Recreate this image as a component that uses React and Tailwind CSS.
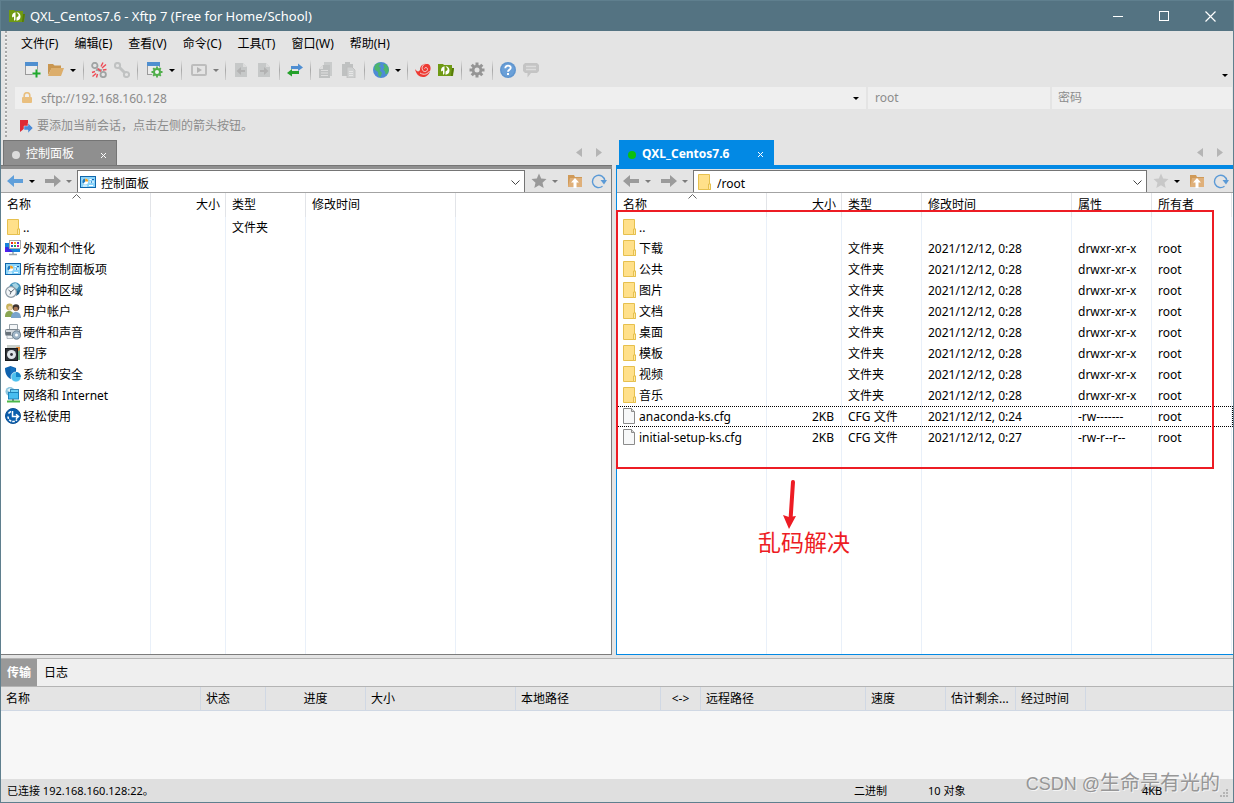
import React from "react";

function Svg({ size = 16, children, className = "", box = "0 0 16 16" }) {
  return (
    <svg width={size} height={size} viewBox={box} className={"shrink-0 " + className} aria-hidden="true">
      {children}
    </svg>
  );
}

/* ---------- toolbar icons ---------- */

const FolderLogo = ({ className }) => (
  <Svg className={className}>
    <path d="M0 2h5l1 1h8v3h2l-1 8H0z" fill="#6f9a14" />
    <path d="M14 6h2l-1.500 8H13z" fill="#557a08" />
    <path d="M3 8.500C3 6 4.500 4.500 6.500 4.300V11c0 1-.500 1.800-1.500 1.500V8.500L3.500 9.500z" fill="#fff" />
    <path d="M7.500 4.300C10 4.300 11.500 6 11.500 8.500c0 2.500-1.500 4-4 4.300V9.500L9.500 8V6.500z" fill="#fff" />
  </Svg>
);

const NewSession = () => (
  <Svg>
    <rect x="0.500" y="0.500" width="12" height="12" fill="#ececec" stroke="#9a9a9a" />
    <rect x="0" y="0" width="13" height="4" fill="#4f8fd0" />
    <path d="M11.500 7.500v8M7.500 11.500h8" stroke="#e4e4e4" strokeWidth="4" />
    <path d="M11.500 7.500v8M7.500 11.500h8" stroke="#1fa82c" strokeWidth="2" />
  </Svg>
);

const OpenFolder = () => (
  <Svg>
    <path d="M0 2h5l1.500 1.500H13V6H4L0 13z" fill="#c99650" />
    <path d="M3.500 6H16l-3 8H0z" fill="#dcae6c" />
  </Svg>
);

const LinkBroken = () => (
  <Svg>
    <g fill="none" stroke="#a0a4a4" strokeWidth="1.800">
      <circle cx="3.800" cy="3.500" r="2.700" />
      <circle cx="12.200" cy="12.500" r="2.700" />
      <path d="M5 7.500c1 1 2.500 1 3.500-1M7.500 9.500c1-2 2.500-2 3.500-1" />
    </g>
    <path d="M10 4.500L12 .500M11 6l4-3.500M12 8l3.500-.500M1 10.500l3-1M1.500 14.500L5 11.500M5.500 15.500L6.500 12M6.500 6.500l3.500 3" stroke="#ee4a55" strokeWidth="1.400" />
  </Svg>
);

const LinkGray = () => (
  <Svg>
    <g fill="none" stroke="#c0c2c2" strokeWidth="2">
      <circle cx="3.500" cy="3.500" r="2.600" />
      <circle cx="12.500" cy="12.500" r="2.600" />
      <path d="M5 5l6 6" strokeWidth="3" />
    </g>
  </Svg>
);

const SessionGear = () => (
  <Svg>
    <rect x="0.500" y="0.500" width="12" height="12" fill="#ececec" stroke="#9a9a9a" />
    <rect x="0" y="0" width="13" height="4" fill="#4f8fd0" />
    <circle cx="10" cy="10" r="5.500" fill="#e4e4e4" />
    <circle cx="10" cy="10" r="3" fill="#f4f4f4" stroke="#4fae4a" strokeWidth="2" />
    <path d="M10 4.500v2M10 13.500v2M4.500 10h2M13.500 10h2M6.200 6.200l1.300 1.300M12.500 12.500l1.300 1.300M6.200 13.800l1.300-1.300M12.500 7.500l1.300-1.300" stroke="#4fae4a" strokeWidth="1.800" />
  </Svg>
);

const PlayBox = () => (
  <Svg>
    <rect x="1" y="3" width="14" height="10" rx="1" fill="none" stroke="#bdbdbd" strokeWidth="2" />
    <path d="M6 5l5 3-5 3z" fill="#b4b4b4" />
  </Svg>
);

const DocArrow = ({ right }) => (
  <Svg>
    <path d="M2 1h8l4 4v10H2z" fill="#c6c8c8" />
    <path d="M10 1v4h4" fill="#dcdcdc" />
    {right ? (
      <path d="M4 8h4V5l4.500 4L8 13v-3H4z" fill="#b2b2b2" />
    ) : (
      <path d="M12 8H8V5L3.500 9 8 13v-3h4z" fill="#b2b2b2" />
    )}
  </Svg>
);

const Transfer = () => (
  <Svg>
    <path d="M4 4h7V1.500L16 5.500 11 9V7H4z" fill="#4f8ed2" />
    <path d="M12 9H5V7L0 11l5 3.500V12h7z" fill="#24a12a" />
  </Svg>
);

const CopyIcon = () => (
  <Svg>
    <path d="M6 0h8v14H6z" fill="#c9cbcb" />
    <path d="M5 3h7v13H1V7z" fill="#bfc1c1" />
    <path d="M3 8.500h7M3 11h7M3 13.500h7" stroke="#dedede" />
    <path d="M1 7l4-4v4z" fill="#dedede" />
  </Svg>
);

const PasteIcon = () => (
  <Svg>
    <path d="M1 2h3V0h5v2h3v12H1z" fill="#bfc1c1" />
    <path d="M6 5h5l3 3v8H6z" fill="#cfd1d1" stroke="#bcbcbc" strokeWidth="0.800" />
    <path d="M8 9.500h4M8 11.500h4M8 13.500h4" stroke="#e6e6e6" />
  </Svg>
);

const GlobeIcon = () => (
  <Svg>
    <circle cx="8" cy="8" r="8" fill="#4d8bd6" />
    <path d="M1.500 4C3 1.500 5 .500 7 .700l.500 2L5.500 4 8 6 6.500 8l2.500 3-1.500 4-2-1L5 10 1.500 7.500zM10 2.500l2.500-.500 2.500 2.500 1 4-1.500 3-2 1-.500-3-2-2 1.500-2z" fill="#4cb56c" />
  </Svg>
);

const Swirl = () => (
  <Svg>
    <path d="M0 7c2 3 4 3 5 1 0-5 4-7 8-6 3 1 3 5 2 7-1 4-4 6-7 6-4 0-7-3-8-8z" fill="#ee3a33" />
    <path d="M14 1.500c-5-1-8 3-6.500 6.500 1 2.300 4.500 2 5-.500.300-2-2.500-2.700-3-1M5 11c4 2.500 8 1 9.500-2" fill="none" stroke="#efe2e2" strokeWidth="0.900" />
  </Svg>
);

const GearIcon = () => (
  <Svg>
    <g stroke="#959595" strokeWidth="3">
      <path d="M8 0.500v15M0.500 8h15M2.700 2.700l10.600 10.600M2.700 13.300L13.300 2.700" />
    </g>
    <circle cx="8" cy="8" r="5.200" fill="#959595" />
    <circle cx="8" cy="8" r="2.500" fill="#e4e4e4" />
  </Svg>
);

const HelpIcon = () => (
  <Svg>
    <circle cx="8" cy="8" r="8" fill="#5f95cf" />
    <circle cx="8" cy="8" r="6.500" fill="#6ba0d8" />
    <path d="M5.300 6.300C5.300 2.500 11 3 10.700 6c-.200 1.800-2.700 1.800-2.700 3.800" fill="none" stroke="#fff" strokeWidth="1.900" />
    <rect x="7" y="11" width="2" height="2" fill="#fff" />
  </Svg>
);

const ChatIcon = () => (
  <Svg>
    <path d="M2 1h12l2 2v6l-2 2H8l-3.500 4.500V11H2L0 9V3z" fill="#c4c4c4" />
    <path d="M3 4.500h10M3 7.500h10" stroke="#dcdcdc" strokeWidth="1.500" />
  </Svg>
);

/* ---------- small glyphs ---------- */

const Caret = ({ gray }) => (
  <svg width="6" height="3" viewBox="0 0 6 3" className={"shrink-0 " + (gray ? "text-[#7c7c7c]" : "text-black")} aria-hidden="true">
    <path d="M0 0h6L3 3z" fill="currentColor" />
  </svg>
);

const CloseGlyph = () => (
  <svg width="7" height="7" viewBox="0 0 7 7" aria-hidden="true">
    <path d="M1 1l5 5M6 1L1 6" stroke="#fff" strokeWidth="1" />
  </svg>
);

const NavArrow = ({ color, right }) => (
  <Svg>
    {right ? (
      <path d="M0 6h9V2l7 6-7 6v-4H0z" fill={color} />
    ) : (
      <path d="M16 6H7V2L0 8l7 6v-4h9z" fill={color} />
    )}
  </Svg>
);

const StarIcon = ({ color }) => (
  <Svg>
    <path d="M8 .500l2.200 5 5.300.600-4 3.600 1.200 5.300L8 12.300 3.300 15l1.200-5.300-4-3.600 5.300-.600z" fill={color} />
  </Svg>
);

const FolderUp = () => (
  <Svg>
    <path d="M1 2h6l1 2h7v10H1z" fill="#d09a58" />
    <path d="M3 5h12v9H1z" fill="#dfb07a" />
    <path d="M8 5l4 4.500H9.500V15h-3V9.500H4z" fill="#fff" />
  </Svg>
);

const Refresh = () => (
  <Svg>
    <path d="M11.500 13.300a6.200 6.200 0 1 1 2.300-5.800" fill="none" stroke="#5b9ad6" strokeWidth="1.400" />
    <path d="M9.500 7H16l-3 4.500z" fill="#5b9ad6" />
  </Svg>
);

const LockIcon = () => (
  <svg width="12" height="12" viewBox="0 0 12 12" className="shrink-0" aria-hidden="true">
    <path d="M3.200 6V3.500a2.700 2.700 0 0 1 5.600 0V6" fill="none" stroke="#e9bf7f" strokeWidth="1.600" />
    <rect x="1" y="5" width="10" height="6" rx="1" fill="#e9bf7f" />
  </svg>
);

const FlagArrow = () => (
  <svg width="13" height="13" viewBox="0 0 13 13" className="shrink-0" aria-hidden="true">
    <path d="M0 0h8v8H5l-5 4z" fill="#dd2a36" />
    <path d="M4 6h4V3l5 5-5 5v-3H4z" fill="#4b8bd8" stroke="#e4e4e4" strokeWidth="0.500" />
  </svg>
);

/* ---------- file icons ---------- */

const FolderIcon = () => (
  <Svg>
    <path d="M2.500 0.500h11v9.500h1v5.500h-12z" fill="#ffe08a" stroke="#e6c04e" />
    <path d="M12.500 15.500v-5.500h2v5.500z" fill="#ffe9a8" stroke="#e6c04e" />
  </Svg>
);

const FileIcon = () => (
  <Svg>
    <path d="M2.500 0.500h8l3 3v12h-11z" fill="#f7f8f9" stroke="#8b8b8b" />
    <path d="M10.500 0.500v3h3" fill="#d8d8d8" stroke="#8b8b8b" />
  </Svg>
);

const PanelIcon = () => (
  <Svg>
    <rect x="0.500" y="2.500" width="15" height="11" fill="#8ad4fa" stroke="#0f66ac" />
    <circle cx="5.200" cy="7.500" r="3" fill="#fff" />
    <path d="M5.200 7.500V4.500a3 3 0 0 0-2 5.200z" fill="#1c7cc4" />
    <path d="M5.200 7.500h3a3 3 0 0 0-3-3z" fill="#f5a01e" />
    <path d="M9.500 5.500h2M9.500 8h1.500M12 8h2M3 12h4M9 11.500h4" stroke="#fff" strokeWidth="1.200" />
    <path d="M12 5.500h2M11 8h1" stroke="#1c66b0" strokeWidth="1.200" />
  </Svg>
);

const AppearanceIcon = () => (
  <Svg>
    <rect x="0" y="3" width="15" height="9" fill="#1583dc" />
    <path d="M0 7l5 5H0z" fill="#5a1cf0" />
    <path d="M0 7h3l5 5H3z" fill="#3a2ce0" />
    <path d="M4 14.500h8M8 12v2" stroke="#9aa6ae" strokeWidth="1.500" />
    <rect x="4.500" y="0.500" width="11" height="8" fill="#fff" stroke="#a8a8a8" />
    <path d="M6 2h2v2H6z" fill="#e22" />
    <path d="M9 2h2v2H9z" fill="#f39a1b" />
    <path d="M12 2h2v2h-2z" fill="#5b2bd0" />
    <path d="M6 5h2v2H6z" fill="#2a58d0" />
    <path d="M9 5h2v2H9z" fill="#22a24a" />
    <path d="M12 5h2v2h-2z" fill="#d01c8a" />
  </Svg>
);

const ClockIcon = () => (
  <Svg>
    <circle cx="10" cy="6.200" r="6" fill="#3d8fb8" />
    <path d="M7 2l4-1 3 3-2 3-3-1z" fill="#a6d4e4" />
    <path d="M12 9l3-1-1 4-3 2z" fill="#24668c" />
    <circle cx="6" cy="10" r="5.300" fill="#f3f6f8" stroke="#8d9aa4" strokeWidth="1.200" />
    <path d="M3.500 8l2.500 2 3.500-3M6 10l-1 2.500" fill="none" stroke="#56626c" />
  </Svg>
);

const UsersIcon = () => (
  <Svg>
    <circle cx="4.500" cy="4" r="3.400" fill="#c8b25c" />
    <circle cx="5" cy="5" r="2" fill="#ecd0a8" />
    <path d="M0 14c0-5 2-6 4.500-6S9 10 9 14z" fill="#8aa653" />
    <circle cx="11" cy="4.500" r="3.300" fill="#3c3330" />
    <circle cx="10.800" cy="6" r="2.300" fill="#a87756" />
    <path d="M6 15c0-4 2-6 5-6s5 2 5 6z" fill="#7aa4cc" />
  </Svg>
);

const PrinterIcon = () => (
  <Svg>
    <path d="M4.500 0.500h8v6h-8z" fill="#f4f6f8" stroke="#98a2aa" />
    <rect x="0.500" y="5.500" width="14" height="6" rx="1" fill="#d4d9dd" stroke="#7c868e" />
    <path d="M1 8h5v3H1z" fill="#68727a" />
    <path d="M2 11.500h6v3H2z" fill="#eef1f3" stroke="#98a2aa" strokeWidth="0.700" />
    <circle cx="11.500" cy="11" r="4.200" fill="#9eb4c6" stroke="#6a7f90" />
    <circle cx="11.500" cy="11" r="1.500" fill="#fff" />
  </Svg>
);

const ProgramIcon = () => (
  <Svg>
    <path d="M2 0h13v15H2z" fill="#c9cfca" />
    <path d="M11 2h4v7z" fill="#e08a3a" />
    <path d="M12 7l3-2v10h-3z" fill="#6faf83" />
    <rect x="0.500" y="3.500" width="12" height="12" fill="#2e3238" stroke="#15181c" />
    <circle cx="6.500" cy="9.500" r="4.500" fill="#dfe6ea" />
    <circle cx="6.500" cy="9.500" r="1.400" fill="#2e3238" />
  </Svg>
);

const ShieldIcon = () => (
  <Svg>
    <path d="M5.500 0L11 2c.500 5-1 8.500-5.500 11C1.500 10.500 0 7 0 2z" fill="#0f62ae" />
    <path d="M5.500 1L10 2.500c.300 4-1 7-4.500 9z" fill="#1571c0" />
    <circle cx="11" cy="11" r="5" fill="#4fc0ee" stroke="#fff" strokeWidth="0.600" />
    <path d="M11 11V6a5 5 0 0 1 5 5z" fill="#1583c8" />
  </Svg>
);

const NetworkIcon = () => (
  <Svg>
    <circle cx="5" cy="4.500" r="4.500" fill="#8cc5de" />
    <path d="M2 3l3-2 2 2-2 2z" fill="#dff1f6" />
    <rect x="5.500" y="2.500" width="8" height="6" fill="#6ed0f4" stroke="#3688b8" />
    <rect x="3.500" y="5.500" width="10" height="6.500" fill="#48bdf0" stroke="#1c84bc" />
    <path d="M8 12v2" stroke="#68808c" strokeWidth="2" />
    <path d="M2 14.500h13" stroke="#4cb84a" strokeWidth="2" />
  </Svg>
);

const EaseIcon = () => (
  <Svg>
    <circle cx="8" cy="8" r="7.500" fill="#0b5fae" stroke="#0a4f94" />
    <path d="M3 8.500a5 5 0 0 0 9 3" fill="none" stroke="#fff" strokeWidth="1.500" strokeDasharray="2.500 1" />
    <path d="M3.500 5.500A5 5 0 0 1 6 3.500" fill="none" stroke="#fff" strokeWidth="1.400" />
    <path d="M7.500 3v5.500H13M11 6.300l2.500 2.200-2.500 2.200" fill="none" stroke="#fff" strokeWidth="1.500" />
  </Svg>
);

/* ---------- toolbar ---------- */

const Tool = ({ label, children }) => (
  <button type="button" aria-label={label} className="flex h-6 w-[23px] shrink-0 items-center justify-center">
    {children}
  </button>
);

const DropTool = ({ label, gray }) => (
  <button type="button" aria-label={label} className="flex h-6 w-[11px] shrink-0 items-center justify-center">
    <Caret gray={gray} />
  </button>
);

const Sep = () => (
  <span className="flex h-5 w-2 shrink-0 justify-center">
    <span className="w-px bg-gradient-to-b from-[#e4e4e4] via-[#a8a8a8] to-[#d0d0d0]" />
  </span>
);

function Toolbar() {
  return (
    <div className="flex h-[26px] items-center pl-[13px] pr-[5px]">
      <div className="flex pr-px">
        <Tool label="新建"><NewSession /></Tool>
        <Tool label="打开"><OpenFolder /></Tool>
        <DropTool label="打开选项" />
      </div>
      <Sep />
      <Tool label="断开"><LinkBroken /></Tool>
      <Tool label="重新连接"><LinkGray /></Tool>
      <Sep />
      <div className="flex pl-0.5">
        <Tool label="属性"><SessionGear /></Tool>
        <DropTool label="属性选项" />
      </div>
      <Sep />
      <div className="flex pl-0.5">
        <Tool label="运行"><PlayBox /></Tool>
        <DropTool label="运行选项" gray />
      </div>
      <Sep />
      <Tool label="下载"><DocArrow /></Tool>
      <Tool label="上传"><DocArrow right /></Tool>
      <Sep />
      <Tool label="同步"><Transfer /></Tool>
      <Sep />
      <Tool label="复制"><CopyIcon /></Tool>
      <Tool label="粘贴"><PasteIcon /></Tool>
      <Sep />
      <div className="flex pl-px">
        <Tool label="编码"><GlobeIcon /></Tool>
        <DropTool label="编码选项" />
      </div>
      <Sep />
      <Tool label="Xshell"><Swirl /></Tool>
      <Tool label="Xftp"><FolderLogo /></Tool>
      <Sep />
      <Tool label="选项"><GearIcon /></Tool>
      <Sep />
      <Tool label="帮助"><HelpIcon /></Tool>
      <Tool label="反馈"><ChatIcon /></Tool>
      <button type="button" aria-label="更多" className="ml-auto self-end pb-1.5">
        <Caret />
      </button>
    </div>
  );
}

/* ---------- panes ---------- */

const TabScroll = () => (
  <div className="ml-auto flex items-center gap-3.5 pr-2.5">
    <button type="button" aria-label="向左">
      <svg width="6" height="9" viewBox="0 0 6 9" aria-hidden="true"><path d="M6 0v9L0 4.500z" fill="#b5b5b5" /></svg>
    </button>
    <button type="button" aria-label="向右">
      <svg width="6" height="9" viewBox="0 0 6 9" aria-hidden="true"><path d="M0 0v9l6-4.500z" fill="#b5b5b5" /></svg>
    </button>
  </div>
);

function NavBar({ id, value, icon, backColor, backGray, starColor, starGray }) {
  return (
    <div className="flex h-6 items-stretch border-b border-[#a3a3a3] bg-[#e4e4e4] pt-px">
      <div className="flex w-[76px] shrink-0 items-center pl-1.5">
        <button type="button" aria-label="后退"><NavArrow color={backColor} /></button>
        <button type="button" aria-label="后退历史" className="flex w-[22px] justify-center pr-1"><Caret gray={backGray} /></button>
        <button type="button" aria-label="前进"><NavArrow color="#9b9b9b" right /></button>
        <button type="button" aria-label="前进历史" className="flex w-4 justify-center"><Caret gray /></button>
      </div>
      <div className="flex min-w-0 flex-1 items-center border border-b-0 border-[#757575] bg-white pl-0.5 pr-1">
        <label htmlFor={id} aria-label="路径">{icon}</label>
        <input id={id} defaultValue={value} className="h-[21px] min-w-0 flex-1 bg-transparent pl-[5px] pt-[3px] outline-none" />
        <button type="button" aria-label="展开路径" className="pt-0.5">
          <svg width="9" height="6" viewBox="0 0 9 6" aria-hidden="true"><path d="M.5.5l4 4 4-4" fill="none" stroke="#444" /></svg>
        </button>
      </div>
      <div className="flex w-[86px] shrink-0 items-center pl-1.5">
        <button type="button" aria-label="收藏"><StarIcon color={starColor} /></button>
        <button type="button" aria-label="收藏列表" className="flex w-5 justify-center pr-1"><Caret gray={starGray} /></button>
        <button type="button" aria-label="上级文件夹"><FolderUp /></button>
        <button type="button" aria-label="刷新" className="pl-2"><Refresh /></button>
      </div>
    </div>
  );
}

const cellLine = "border-r border-[#e9f0f9]";
const headLine = "border-r border-[#e2e4e8]";

function FileTable({ label, columns, rows, focus }) {
  return (
    <table aria-label={label} className="w-full table-fixed border-separate border-spacing-0 text-left">
      <colgroup>
        <col className="w-[150px]" />
        <col className="w-[75px]" />
        <col className="w-[80px]" />
        <col className="w-[150px]" />
        {columns.length > 4 && <col className="w-[80px]" />}
        {columns.length > 4 && <col className="w-[80px]" />}
        <col />
      </colgroup>
      <thead>
        <tr className="h-6">
          {columns.map((c, i) => (
            <th key={c} className={`relative p-0 font-normal ${headLine} ${i === 1 ? "pr-[5px] text-right" : "pl-1.5"}`}>
              {c}
              {i === 0 && (
                <svg width="9" height="5" viewBox="0 0 9 5" className="absolute left-[71px] top-px" aria-hidden="true">
                  <path d="M.5 4.500l4-4 4 4" fill="none" stroke="#666" />
                </svg>
              )}
            </th>
          ))}
          <th className="p-0" />
        </tr>
      </thead>
      <tbody>
        {rows.map((r, ri) => (
          <tr key={r.name} className={`h-[21px] ${ri === focus ? "outline-dotted outline-1 -outline-offset-1 outline-black" : ""}`}>
            <td className={`p-0 align-top ${cellLine}`}>
              <div className="flex h-5 items-center gap-0.5 whitespace-nowrap pl-1 leading-[21px]">
                {r.icon}
                <span>{r.name}</span>
              </div>
            </td>
            {columns.slice(1).map((c, i) => (
              <td key={c} className={`whitespace-nowrap p-0 ${cellLine} ${i === 0 ? "pr-[7px] text-right" : "pl-1.5"}`}>
                {(r.cells || [])[i]}
              </td>
            ))}
            <td className="p-0" />
          </tr>
        ))}
        <tr>
          {columns.map((c) => (
            <td key={c} className={`p-0 ${cellLine}`} />
          ))}
          <td className="p-0" />
        </tr>
      </tbody>
    </table>
  );
}

const localRows = [
  { name: "..", icon: <FolderIcon />, cells: ["", "文件夹"] },
  { name: "外观和个性化", icon: <AppearanceIcon /> },
  { name: "所有控制面板项", icon: <PanelIcon /> },
  { name: "时钟和区域", icon: <ClockIcon /> },
  { name: "用户帐户", icon: <UsersIcon /> },
  { name: "硬件和声音", icon: <PrinterIcon /> },
  { name: "程序", icon: <ProgramIcon /> },
  { name: "系统和安全", icon: <ShieldIcon /> },
  { name: "网络和 Internet", icon: <NetworkIcon /> },
  { name: "轻松使用", icon: <EaseIcon /> },
];

const remoteRows = [
  { name: "..", icon: <FolderIcon /> },
  ...["下载", "公共", "图片", "文档", "桌面", "模板", "视频", "音乐"].map((name) => ({
    name,
    icon: <FolderIcon />,
    cells: ["", "文件夹", "2021/12/12, 0:28", "drwxr-xr-x", "root"],
  })),
  { name: "anaconda-ks.cfg", icon: <FileIcon />, cells: ["2KB", "CFG 文件", "2021/12/12, 0:24", "-rw-------", "root"] },
  { name: "initial-setup-ks.cfg", icon: <FileIcon />, cells: ["2KB", "CFG 文件", "2021/12/12, 0:27", "-rw-r--r--", "root"] },
];

function LocalPane() {
  return (
    <section className="flex min-w-0 flex-col">
      <div className="flex h-7 shrink-0 items-stretch pl-0.5 pt-[3px]">
        <div className="flex w-[114px] items-center border border-b-0 border-[#757575] bg-[#8f8f8f] pl-2 pr-[9px] pt-1 text-white">
          <span className="size-2 rounded-full bg-[#dcdcdc]" />
          <button type="button" className="pb-0.5 pl-1.5">控制面板</button>
          <button type="button" aria-label="关闭" className="ml-auto"><CloseGlyph /></button>
        </div>
        <TabScroll />
      </div>
      <div className="h-1 shrink-0 border-t border-[#757575] bg-[#8f8f8f]" />
      <div className="flex min-h-0 flex-1 flex-col border-b border-r border-[#7c7c7c] bg-white">
        <NavBar id="local-path" value="控制面板" icon={<PanelIcon />} backColor="#5f9fda" starColor="#999" starGray />
        <div className="flex flex-1">
          <FileTable label="本地文件" columns={["名称", "大小", "类型", "修改时间"]} rows={localRows} />
        </div>
      </div>
    </section>
  );
}

function RemotePane() {
  return (
    <section className="relative flex min-w-0 flex-col">
      <div className="flex h-7 shrink-0 items-stretch pl-[3px] pt-[3px]">
        <div className="flex w-[155px] items-center bg-[#0289e4] pl-[9px] pr-2.5 pt-1 text-white">
          <span className="size-2 rounded-full bg-[#0cc00c]" />
          <button type="button" className="pb-0.5 pl-1.5 font-bold">QXL_Centos7.6</button>
          <button type="button" aria-label="关闭" className="ml-auto"><CloseGlyph /></button>
        </div>
        <TabScroll />
      </div>
      <div className="h-1 shrink-0 bg-[#0289e4]" />
      <div className="flex min-h-0 flex-1 flex-col border-b border-l border-[#0289e4] bg-white">
        <NavBar id="remote-path" value="/root" icon={<FolderIcon />} backColor="#9b9b9b" backGray starColor="#c8c8c8" />
        <div className="flex flex-1">
          <FileTable label="远程文件" columns={["名称", "大小", "类型", "修改时间", "属性", "所有者"]} rows={remoteRows} focus={9} />
        </div>
      </div>
      <div className="pointer-events-none absolute left-0 top-[73px] flex w-[598px] flex-col">
        <div className="h-[259px] border-2 border-[#ed1c24]" />
        <svg width="14" height="50" viewBox="0 0 14 50" className="ml-[167px] mt-[11px]" aria-hidden="true">
          <path d="M10 2L7.500 40" stroke="#ed1c24" strokeWidth="4" strokeLinecap="round" />
          <path d="M0 35l6 2 7-1-7 13z" fill="#ed1c24" />
        </svg>
        <p className="ml-[142px] text-[23px] leading-6 text-[#ed1c24]">乱码解决</p>
      </div>
    </section>
  );
}

/* ---------- bottom ---------- */

function TransferPanel() {
  const cols = ["名称", "状态", "进度", "大小", "本地路径", "<->", "远程路径", "速度", "估计剩余...", "经过时间"];
  return (
    <section className="mt-[3px] border-t border-[#b4b4b4]">
      <div className="flex h-7 items-stretch border-b border-[#b4b4b4] bg-[#efefef]">
        <button type="button" className="w-9 bg-[#999] font-bold text-white">传输</button>
        <button type="button" className="px-[7px]">日志</button>
      </div>
      <table aria-label="传输" className="w-full table-fixed border-separate border-spacing-0 bg-[#e4e4e4] text-left">
        <colgroup>
          <col className="w-[200px]" />
          <col className="w-[65px]" />
          <col className="w-[100px]" />
          <col className="w-[150px]" />
          <col className="w-[145px]" />
          <col className="w-[40px]" />
          <col className="w-[165px]" />
          <col className="w-[80px]" />
          <col className="w-[70px]" />
          <col className="w-[70px]" />
          <col />
        </colgroup>
        <thead>
          <tr className="h-6">
            {cols.map((c) => (
              <th key={c} className={`whitespace-nowrap border-b border-r border-[#d0d8e4] p-0 font-normal ${c === "进度" || c === "<->" ? "text-center" : "pl-[5px]"}`}>
                {c}
              </th>
            ))}
            <th className="border-b border-[#d0d8e4] p-0" />
          </tr>
        </thead>
      </table>
      <div className="h-[68px] bg-[#f7f7f7]" />
    </section>
  );
}

function StatusBar() {
  return (
    <footer className="relative flex h-[23px] items-center bg-[#dfdfdf] pl-1.5 text-[11px]">
      <span className="flex-1">已连接 192.168.160.128:22。</span>
      <span className="w-[74px]">二进制</span>
      <span className="w-[214px]">10 对象</span>
      <span className="relative z-10 w-[91px]">4KB</span>
      <svg width="9" height="9" viewBox="0 0 9 9" className="absolute bottom-1 right-1" aria-hidden="true">
        <path d="M6 0h2v2H6zM3 3h2v2H3zM6 3h2v2H6zM0 6h2v2H0zM3 6h2v2H3zM6 6h2v2H6z" fill="#b5b5b5" />
      </svg>
      <span className="pointer-events-none absolute bottom-1 right-[13px] whitespace-nowrap font-['Liberation_Sans','Noto_Sans_CJK_SC',sans-serif] text-[20px] leading-7 text-[#8b8b8b]/90 [text-shadow:1px_1px_0_#f4f4f4]">
        <span className="text-[18px]">CSDN @</span>生命是有光的
      </span>
    </footer>
  );
}

export default function App() {
  return (
    <div className="flex min-h-screen flex-col border border-[#5f7f8e] bg-[#e4e4e4] font-['Noto_Sans','Noto_Sans_CJK_SC',sans-serif] text-xs leading-4 text-black">
      <header className="flex h-[30px] shrink-0 items-center bg-[#547382] pl-2 text-white">
        <FolderLogo />
        <h1 className="flex-1 pl-[5px] text-[13px]">QXL_Centos7.6 - Xftp 7 (Free for Home/School)</h1>
        <button type="button" aria-label="最小化" className="flex h-full w-[46px] items-center justify-center">
          <span className="h-px w-2.5 bg-white" />
        </button>
        <button type="button" aria-label="最大化" className="flex h-full w-[46px] items-center justify-center">
          <span className="size-2.5 border border-white" />
        </button>
        <button type="button" aria-label="关闭窗口" className="flex h-full w-[46px] items-center justify-center">
          <svg width="11" height="11" viewBox="0 0 11 11" aria-hidden="true"><path d="M.5.5l10 10M10.500.5L.5 10.500" stroke="#fff" strokeWidth="1.200" /></svg>
        </button>
      </header>

      <div className="flex shrink-0">
        <div className="ml-1 mr-px w-0.5 bg-[repeating-linear-gradient(to_bottom,#a8a8a8_0_2px,#f4f4f4_2px_3px,#e4e4e4_3px_4px)]" />
        <div className="min-w-0 flex-1">
          <nav className="flex h-[26px] items-center gap-4 pl-[13px]">
            {["文件(F)", "编辑(E)", "查看(V)", "命令(C)", "工具(T)", "窗口(W)", "帮助(H)"].map((m) => (
              <button type="button" key={m}>{m}</button>
            ))}
          </nav>
          <Toolbar />
          <div className="mt-1 flex h-[22px] gap-0.5 pl-[7px] pr-px text-[#8c8c8c]">
            <div className="flex min-w-0 flex-1 items-center bg-[#efefef] pl-1.5 pr-[7px]">
              <label htmlFor="address" aria-label="地址"><LockIcon /></label>
              <input id="address" defaultValue="sftp://192.168.160.128" className="h-full min-w-0 flex-1 bg-transparent pl-2 pt-px outline-none" />
              <button type="button" aria-label="地址历史"><Caret /></button>
            </div>
            <input aria-label="用户名" defaultValue="root" className="w-[182px] bg-[#efefef] px-[7px] outline-none" />
            <input aria-label="密码" placeholder="密码" className="w-[180px] bg-[#efefef] px-1.5 outline-none placeholder:text-[#8c8c8c]" />
          </div>
          <div className="flex h-7 items-center gap-1 pl-3 pt-1.5 text-[#8c8c8c]">
            <FlagArrow />
            <span>要添加当前会话，点击左侧的箭头按钮。</span>
          </div>
        </div>
      </div>

      <main className="grid flex-1 grid-cols-[611fr_617fr] gap-1">
        <LocalPane />
        <RemotePane />
      </main>

      <TransferPanel />
      <StatusBar />
    </div>
  );
}
